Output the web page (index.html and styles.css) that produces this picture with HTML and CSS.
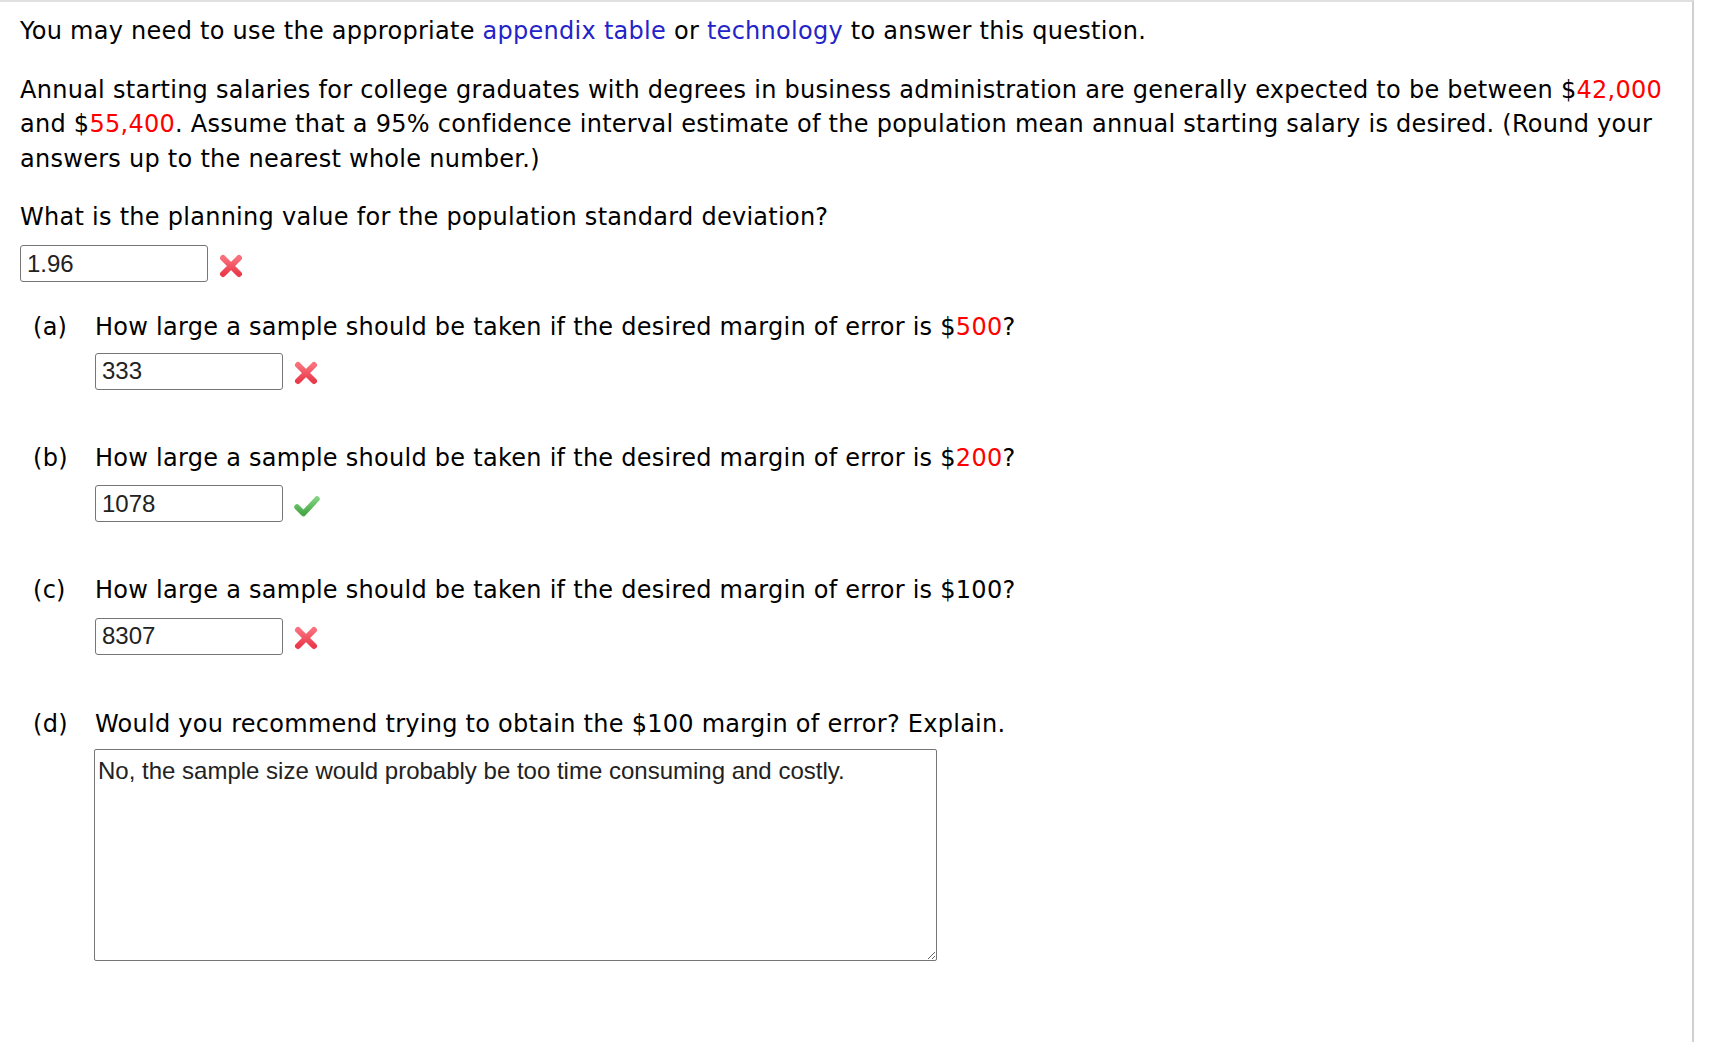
FILE: index.html
```html
<!DOCTYPE html>
<html lang="en">
<head>
<meta charset="utf-8">
<title>Question</title>
<link rel="stylesheet" href="styles.css">
</head>
<body>
<div class="frame">
  <p class="intro">You may need to use the appropriate <a class="link" href="#">appendix table</a> or <a class="link" href="#">technology</a> to answer this question.</p>
  <p class="problem">Annual starting salaries for college graduates with degrees in business administration are generally expected to be between $<span class="red">42,000</span> and $<span class="red">55,400</span>. Assume that a 95% confidence interval estimate of the population mean annual starting salary is desired. (Round your answers up to the nearest whole number.)</p>
  <p class="question">What is the planning value for the population standard deviation?</p>
  <div class="answer-row first">
    <input class="answer" type="text" value="1.96">
    <svg class="icon" width="26" height="26" viewBox="0 0 26 26"><defs><linearGradient id="rx" x1="0" y1="0" x2="0" y2="1"><stop offset="0" stop-color="#f9707c"/><stop offset="1" stop-color="#ea3a4b"/></linearGradient></defs><path d="M5 5 L21 21 M21 5 L5 21" stroke="url(#rx)" stroke-width="6" stroke-linecap="round"/></svg>
  </div>

  <div class="part">
    <span class="label">(a)</span>
    <div class="body">
      <p class="question">How large a sample should be taken if the desired margin of error is $<span class="red">500</span>?</p>
      <div class="answer-row tight">
        <input class="answer" type="text" value="333">
        <svg class="icon" width="26" height="26" viewBox="0 0 26 26"><defs><linearGradient id="rx2" x1="0" y1="0" x2="0" y2="1"><stop offset="0" stop-color="#f9707c"/><stop offset="1" stop-color="#ea3a4b"/></linearGradient></defs><path d="M5 5 L21 21 M21 5 L5 21" stroke="url(#rx2)" stroke-width="6" stroke-linecap="round"/></svg>
      </div>
    </div>
  </div>

  <div class="part">
    <span class="label">(b)</span>
    <div class="body">
      <p class="question">How large a sample should be taken if the desired margin of error is $<span class="red">200</span>?</p>
      <div class="answer-row">
        <input class="answer" type="text" value="1078">
        <svg class="icon" width="28" height="26" viewBox="0 0 28 26"><defs><linearGradient id="gc" x1="0" y1="0" x2="0" y2="1"><stop offset="0" stop-color="#7fd07f"/><stop offset="1" stop-color="#46a846"/></linearGradient></defs><path d="M4 14 L10.5 20.5 L24 6" fill="none" stroke="url(#gc)" stroke-width="5.5" stroke-linecap="round" stroke-linejoin="round"/></svg>
      </div>
    </div>
  </div>

  <div class="part">
    <span class="label">(c)</span>
    <div class="body">
      <p class="question">How large a sample should be taken if the desired margin of error is $100?</p>
      <div class="answer-row">
        <input class="answer" type="text" value="8307">
        <svg class="icon" width="26" height="26" viewBox="0 0 26 26"><defs><linearGradient id="rx3" x1="0" y1="0" x2="0" y2="1"><stop offset="0" stop-color="#f9707c"/><stop offset="1" stop-color="#ea3a4b"/></linearGradient></defs><path d="M5 5 L21 21 M21 5 L5 21" stroke="url(#rx3)" stroke-width="6" stroke-linecap="round"/></svg>
      </div>
    </div>
  </div>

  <div class="part last">
    <span class="label">(d)</span>
    <div class="body">
      <p class="question">Would you recommend trying to obtain the $100 margin of error? Explain.</p>
      <textarea class="essay">No, the sample size would probably be too time consuming and costly.</textarea>
    </div>
  </div>
</div>
</body>
</html>
```

FILE: styles.css
```css
html, body {
  margin: 0;
  padding: 0;
  background: #ffffff;
}

.frame {
  box-sizing: border-box;
  width: 1694px;
  min-height: 1042px;
  border-top: 2px solid #e0e0e0;
  border-right: 2px solid #d0d0d0;
  padding: 12px 13px 0 20px;
  font-family: "DejaVu Sans", Verdana, sans-serif;
  font-size: 24px;
  letter-spacing: 0.27px;
  line-height: 34.5px;
  color: #000;
}

p {
  margin: 0;
}

.intro {
  margin-bottom: 24px;
}

.problem {
  margin-bottom: 23.5px;
}

.link {
  color: #2323c8;
  text-decoration: none;
}

.red {
  color: #ff0000;
}

.answer-row {
  display: flex;
  align-items: center;
  gap: 10px;
  margin-top: 10px;
}

.answer-row.first {
  margin-top: 11px;
}

.answer-row.tight {
  margin-top: 8px;
}

.answer {
  box-sizing: border-box;
  width: 188px;
  height: 37px;
  border: 1px solid #767676;
  border-radius: 3px;
  padding: 0 6px;
  font-family: "Liberation Sans", Arial, sans-serif;
  font-size: 24px;
  letter-spacing: 0;
  color: #222;
  background: #fff;
  outline: none;
}

.icon {
  display: block;
  margin-top: 4px;
}

.part {
  display: flex;
  margin-top: 28px;
}

.part + .part {
  margin-top: 51px;
}

.part.last {
  margin-top: 52px;
}

.label {
  width: 75px;
  padding-left: 13px;
  box-sizing: border-box;
  flex: none;
}

.body {
  flex: 1;
}

.essay {
  display: block;
  box-sizing: border-box;
  width: 843px;
  height: 212px;
  margin-top: 8px;
  margin-left: -1px;
  border: 1px solid #767676;
  border-radius: 2px;
  padding: 7px 3px;
  font-family: "Liberation Sans", Arial, sans-serif;
  font-size: 24px;
  letter-spacing: 0;
  line-height: 28px;
  color: #222;
  resize: both;
  outline: none;
}
```
